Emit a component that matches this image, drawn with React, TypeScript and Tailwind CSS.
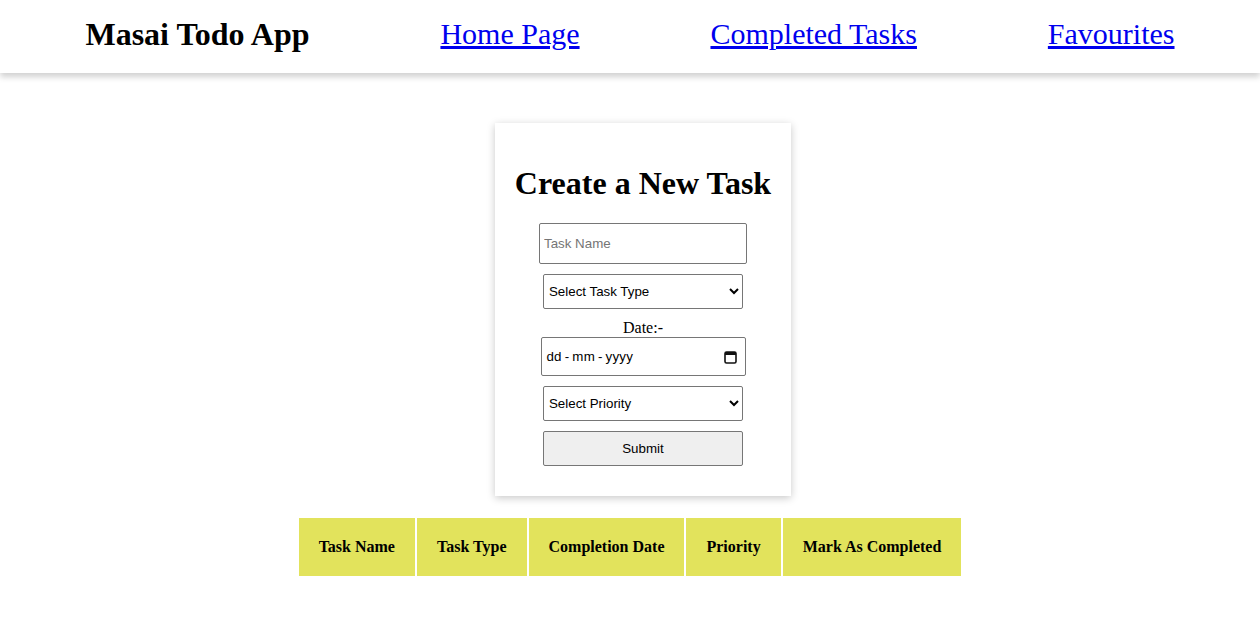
const serif = "font-['Times_New_Roman','Liberation_Serif',serif]"
const control =
  "font-['Arial','Liberation_Sans',sans-serif] text-[13.33px] text-black border border-[#767676] rounded-[2px]"

const columns = ['Task Name', 'Task Type', 'Completion Date', 'Priority', 'Mark As Completed']

function Navbar() {
  return (
    <nav className="flex h-[73px] items-center justify-around px-5 pb-[6px] bg-white shadow-[0_4px_6px_rgba(0,0,0,0.18)]">
      <h2 className="text-[32px] font-bold leading-none">Masai Todo App</h2>
      <a href="#" className="text-[30px] leading-none text-[#0000ee] underline">
        Home Page
      </a>
      <a href="#" className="text-[30px] leading-none text-[#0000ee] underline">
        Completed Tasks
      </a>
      <a href="#" className="text-[30px] leading-none text-[#0000ee] underline">
        Favourites
      </a>
    </nav>
  )
}

function DateField() {
  // fake date input so the placeholder reads dd-mm-yyyy like the screenshot
  return (
    <div
      className={`${control} ml-[2px] w-[205px] h-[39px] pl-[4px] pr-[8px] flex items-center justify-between bg-white`}
    >
      <span className="tracking-[0.2px]">
        dd<span className="mx-[3px]">-</span>mm<span className="mx-[3px]">-</span>yyyy
      </span>
      <svg width="13" height="14" viewBox="0 0 13 14" fill="none">
        <rect x="1" y="2" width="11" height="11" rx="1.5" stroke="#111" strokeWidth="1.6" />
        <rect x="1" y="2" width="11" height="3" fill="#111" />
      </svg>
    </div>
  )
}

function TaskForm() {
  return (
    <div className="flex justify-center pl-[26px] mt-[50px]">
      <form className="flex flex-col items-center px-5 pb-[30px] bg-white shadow-[0_2px_8px_rgba(0,0,0,0.22)]">
        <h1 className="text-[32px] font-bold leading-[37px] mt-[42px] mb-[21px]">Create a New Task</h1>
        <input
          type="text"
          placeholder="Task Name"
          className={`${control} w-[208px] h-[41px] px-[4px] bg-white placeholder:text-[#757575]`}
        />
        <select className={`${control} mt-[10px] w-[200px] h-[35px] px-[1px] bg-white`}>
          <option>Select Task Type</option>
          <option>Personal</option>
          <option>Official</option>
        </select>
        <p className="mt-[10px] text-[16px] leading-[18px]">Date:-</p>
        <DateField />
        <select className={`${control} mt-[10px] w-[200px] h-[35px] px-[1px] bg-white`}>
          <option>Select Priority</option>
          <option>High</option>
          <option>Medium</option>
          <option>Low</option>
        </select>
        <button type="button" className={`${control} mt-[10px] w-[200px] h-[35px] bg-[#efefef]`}>
          Submit
        </button>
      </form>
    </div>
  )
}

function TaskTable() {
  return (
    <div className="flex justify-center mt-[20px]">
      <table className="border-separate border-spacing-[2px]">
        <thead>
          <tr>
            {columns.map((c) => (
              <th
                key={c}
                className="bg-[#e2e35c] px-[20px] py-[20px] text-[16px] leading-[18px] font-bold text-black"
              >
                {c}
              </th>
            ))}
          </tr>
        </thead>
      </table>
    </div>
  )
}

export default function App() {
  return (
    <div className={`${serif} min-h-[628px] bg-white text-black`}>
      <Navbar />
      <TaskForm />
      <TaskTable />
    </div>
  )
}
